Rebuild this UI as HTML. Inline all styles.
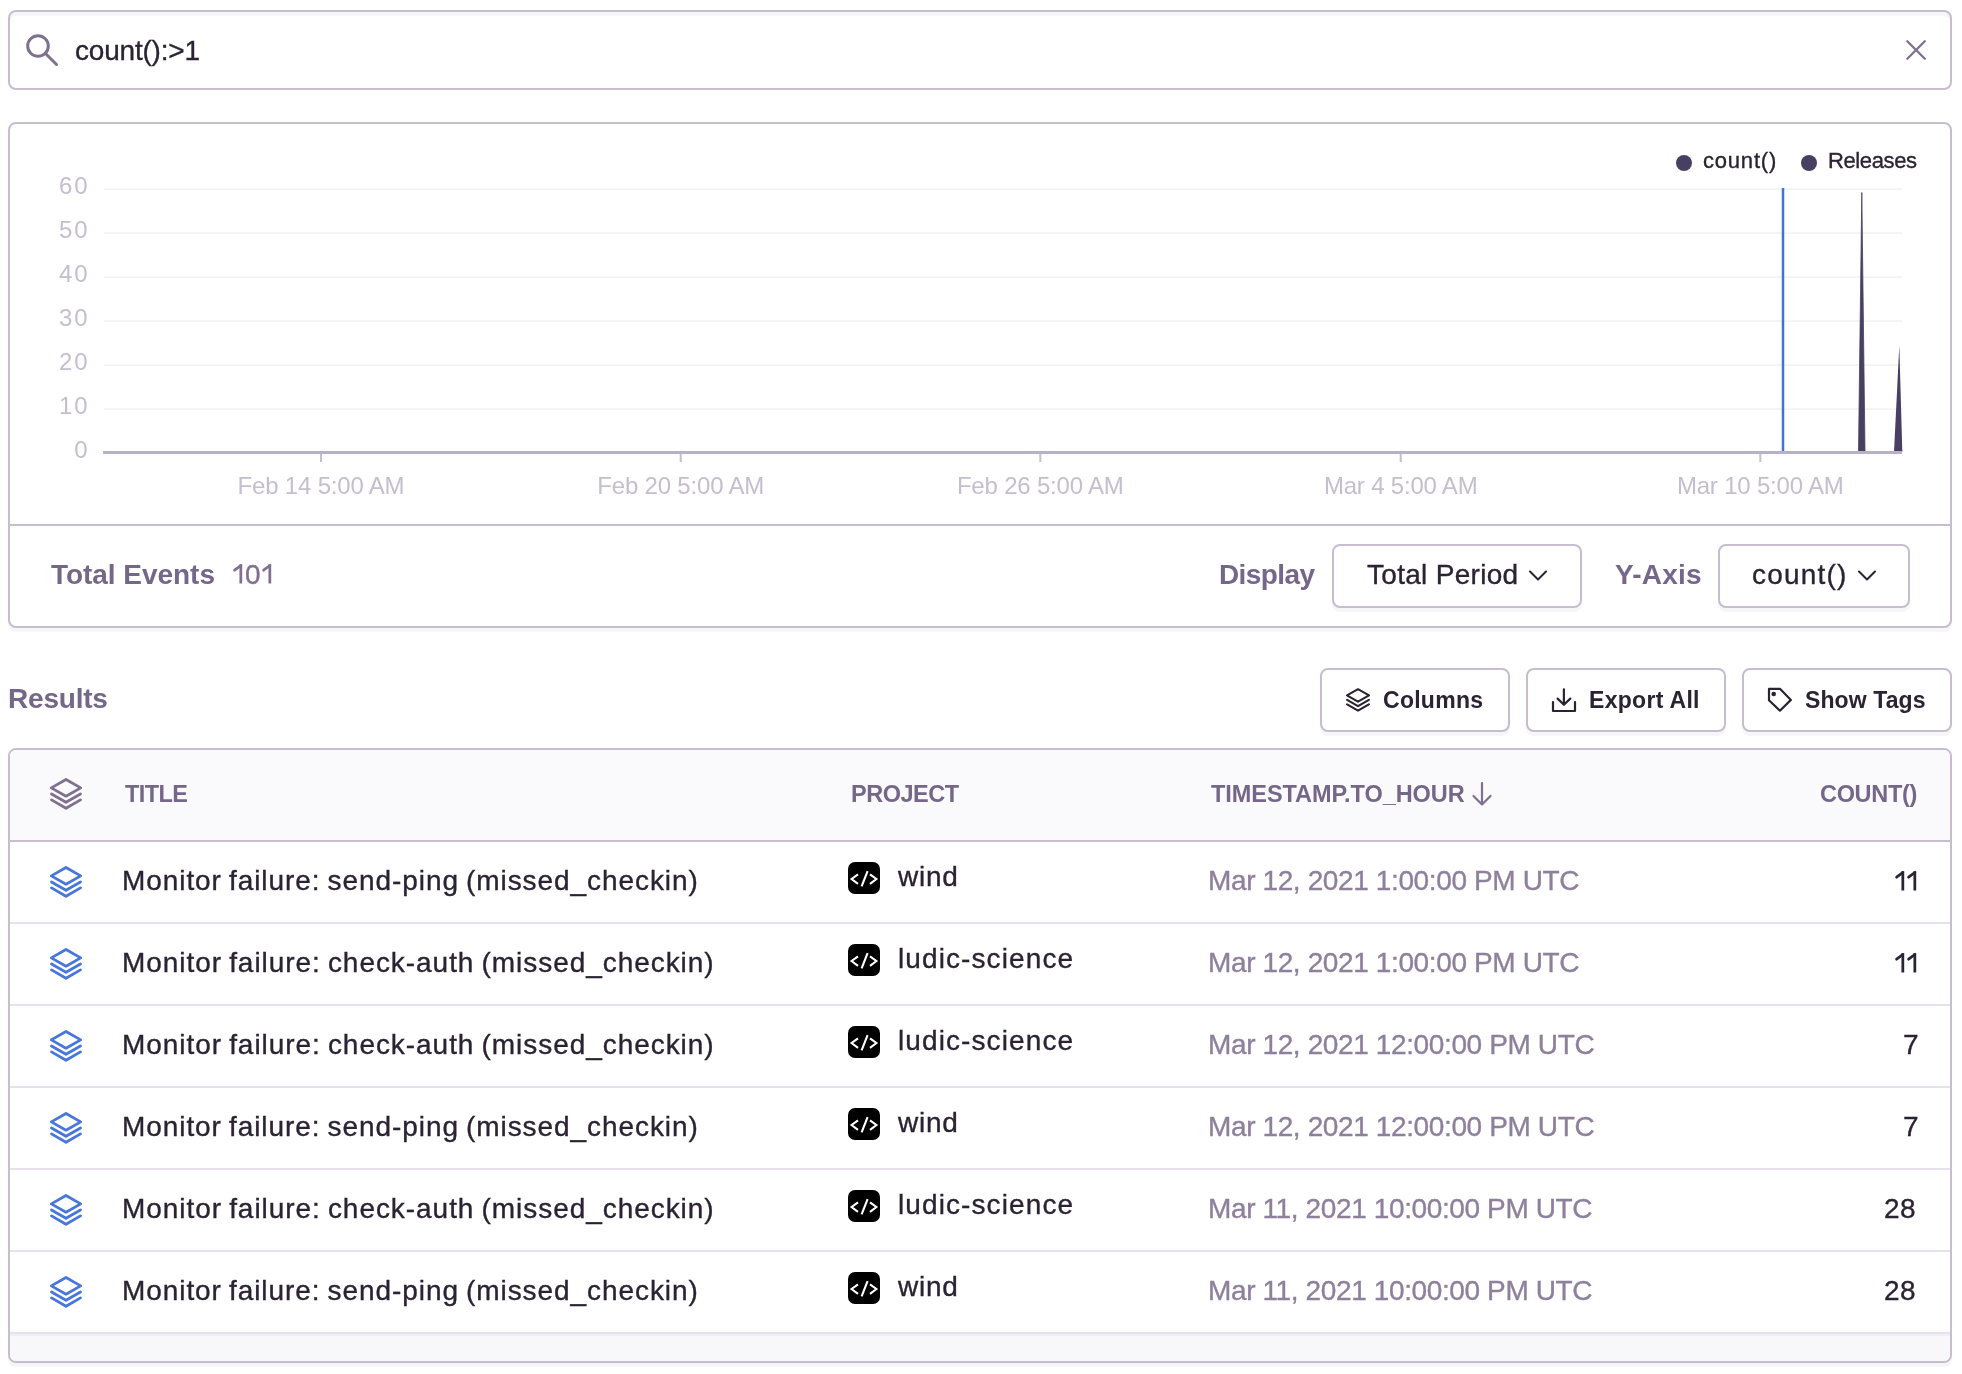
<!DOCTYPE html>
<html>
<head>
<meta charset="utf-8">
<style>
html,body{margin:0;padding:0;background:#fff;}
body{width:1962px;height:1374px;position:relative;overflow:hidden;font-family:"Liberation Sans",sans-serif;color:#2b2233;-webkit-font-smoothing:antialiased;}
.t{position:absolute;white-space:nowrap;line-height:1;will-change:transform;-webkit-text-stroke:0.35px currentColor;}
.b{font-weight:bold;-webkit-text-stroke:0;}
.g{color:#80708f;}
.b.g{color:#756789;}
.g2{color:#8e809c;}
.box{position:absolute;box-sizing:border-box;border:2px solid #c6becf;border-radius:8px;background:#fff;}
.shadow{box-shadow:0 4px 0 rgba(37,11,54,0.04);}
svg{position:absolute;overflow:visible;}
</style>
</head>
<body>

<div class="box" style="left:8px;top:10px;width:1944px;height:80px;box-shadow:inset 0 4px 0 #f6f5f8;"></div>
<svg style="left:24px;top:32px" width="36" height="36" viewBox="0 0 36 36">
  <circle cx="14" cy="14" r="10.3" fill="none" stroke="#80708f" stroke-width="3"/>
  <line x1="21.5" y1="21.5" x2="32.5" y2="32.5" stroke="#80708f" stroke-width="3" stroke-linecap="round"/>
</svg>
<div class="t " style="left:75px;top:37.30px;font-size:28px;letter-spacing:-0.2px;">count():&gt;1</div>
<svg style="left:1904px;top:38px" width="24" height="24" viewBox="0 0 24 24">
  <path d="M3.3 3.2 L20.8 20.7 M20.8 3.2 L3.3 20.7" stroke="#80708f" stroke-width="2.3" stroke-linecap="round"/>
</svg>
<div class="box shadow" style="left:8px;top:122px;width:1944px;height:506px;"></div>
<div style="position:absolute;left:10px;top:524px;width:1940px;height:2px;background:#c6becf;"></div>
<div style="position:absolute;left:1676px;top:155px;width:16px;height:16px;border-radius:50%;background:#483f62;"></div>
<div class="t " style="left:1703px;top:150.38px;font-size:22px;letter-spacing:0.8px;">count()</div>
<div style="position:absolute;left:1801px;top:155px;width:16px;height:16px;border-radius:50%;background:#483f62;"></div>
<div class="t " style="left:1828px;top:150.38px;font-size:22px;letter-spacing:-0.39px;">Releases</div>
<svg style="left:0;top:0" width="1962" height="560" viewBox="0 0 1962 560">
<g stroke="#f4f3f6" stroke-width="2"><line x1="104" y1="189" x2="1902" y2="189"/><line x1="104" y1="233" x2="1902" y2="233"/><line x1="104" y1="277" x2="1902" y2="277"/><line x1="104" y1="321" x2="1902" y2="321"/><line x1="104" y1="365" x2="1902" y2="365"/><line x1="104" y1="409" x2="1902" y2="409"/></g>
<g font-family="Liberation Sans" font-size="24" fill="#c6becf" text-anchor="end" letter-spacing="1.9"><text x="89.4" y="194">60</text><text x="89.4" y="238">50</text><text x="89.4" y="282">40</text><text x="89.4" y="326">30</text><text x="89.4" y="370">20</text><text x="89.4" y="414">10</text><text x="89.4" y="458">0</text></g>
<line x1="1783" y1="188" x2="1783" y2="452" stroke="#3d74db" stroke-width="2.5"/>
<path d="M1858.5 452 L1861.8 192.5 L1865 452 Z" fill="#483f62" stroke="#483f62" stroke-width="0.8"/>
<path d="M1894 452 L1899.3 345.5 L1902.3 452 Z" fill="#483f62"/>
<rect x="103" y="451" width="1799" height="3" fill="#b8b0c6"/>
<g stroke="#c6becf" stroke-width="2"><line x1="321" y1="454" x2="321" y2="462"/><line x1="680.7" y1="454" x2="680.7" y2="462"/><line x1="1040.3" y1="454" x2="1040.3" y2="462"/><line x1="1400.7" y1="454" x2="1400.7" y2="462"/><line x1="1760.3" y1="454" x2="1760.3" y2="462"/></g>
<g font-family="Liberation Sans" font-size="24" fill="#c6becf" text-anchor="middle" letter-spacing="-0.19"><text x="321" y="494">Feb 14 5:00 AM</text><text x="680.7" y="494">Feb 20 5:00 AM</text><text x="1040.3" y="494">Feb 26 5:00 AM</text><text x="1400.7" y="494">Mar 4 5:00 AM</text><text x="1760.3" y="494">Mar 10 5:00 AM</text></g>
</svg>
<div class="t b g" style="left:51px;top:561.30px;font-size:28px;letter-spacing:-0.04px;">Total Events</div>
<svg style="left:232.5px;top:564.2px" width="10" height="19.5" viewBox="0 0 10 19.5"><path d="M1.6 6.2 L7.8 1.5" fill="none" stroke="#80708f" stroke-width="2.75" stroke-linecap="round"/><path d="M6.45 0.2 L9.2 0.2 L9.2 19.5 L6.45 19.5 Z" fill="#80708f"/></svg>
<div class="t g" style="left:245px;top:561.30px;font-size:28px;letter-spacing:0px;">0</div>
<svg style="left:262.2px;top:564.2px" width="10" height="19.5" viewBox="0 0 10 19.5"><path d="M1.6 6.2 L7.8 1.5" fill="none" stroke="#80708f" stroke-width="2.75" stroke-linecap="round"/><path d="M6.45 0.2 L9.2 0.2 L9.2 19.5 L6.45 19.5 Z" fill="#80708f"/></svg>
<div class="t b g" style="left:1219px;top:561.30px;font-size:28px;letter-spacing:-0.6px;">Display</div>
<div class="box shadow" style="left:1332px;top:544px;width:250px;height:64px;"></div>
<div class="t " style="left:1367px;top:561.30px;font-size:28px;letter-spacing:0.3px;">Total Period</div>
<svg style="left:1528px;top:569px" width="20" height="13" viewBox="0 0 20 13"><path d="M2 2.5 L10 10.5 L18 2.5" fill="none" stroke="#2b2233" stroke-width="2.0" stroke-linecap="round" stroke-linejoin="round"/></svg>
<div class="t b g" style="left:1615px;top:561.30px;font-size:28px;letter-spacing:0.2px;">Y-Axis</div>
<div class="box shadow" style="left:1718px;top:544px;width:192px;height:64px;"></div>
<div class="t " style="left:1752px;top:561.30px;font-size:28px;letter-spacing:1.2px;">count()</div>
<svg style="left:1857px;top:569px" width="20" height="13" viewBox="0 0 20 13"><path d="M2 2.5 L10 10.5 L18 2.5" fill="none" stroke="#2b2233" stroke-width="2.0" stroke-linecap="round" stroke-linejoin="round"/></svg>
<div class="t b g" style="left:8px;top:685.30px;font-size:28px;letter-spacing:-0.2px;">Results</div>
<div class="box shadow" style="left:1320px;top:668px;width:190px;height:64px;"></div>
<svg style="left:1346px;top:688px" width="24" height="24" viewBox="0 0 24 24">
  <path d="M12 1.2 L23 7.4 L12 13.6 L1 7.4 Z M1.1 11.9 L12 18.2 L22.9 11.9 M1.1 16.3 L12 22.7 L22.9 16.3" fill="none" stroke="#2b2233" stroke-width="2.1" stroke-linejoin="round" stroke-linecap="round"/>
</svg>
<div class="t b" style="left:1383px;top:688.53px;font-size:23px;letter-spacing:0.27px;">Columns</div>
<div class="box shadow" style="left:1526px;top:668px;width:200px;height:64px;"></div>
<svg style="left:1552px;top:688px" width="24" height="24" viewBox="0 0 24 24">
  <path d="M11.9 1.3 L11.9 16.5 M5.6 10.6 L11.9 16.8 L18.3 10.6 M1 14.1 L1 23 L23 23 L23 14.1" fill="none" stroke="#2b2233" stroke-width="2.2" stroke-linecap="round" stroke-linejoin="round"/>
</svg>
<div class="t b" style="left:1589px;top:688.53px;font-size:23px;letter-spacing:0.3px;">Export All</div>
<div class="box shadow" style="left:1742px;top:668px;width:210px;height:64px;"></div>
<svg style="left:1768px;top:688px" width="24" height="24" viewBox="0 0 24 24">
  <path d="M1 0.9 L12.2 0.9 L22.9 11.9 L11.9 22.7 L1 12.2 Z" fill="none" stroke="#2b2233" stroke-width="2.2" stroke-linejoin="round"/>
  <circle cx="5.7" cy="6" r="2.3" fill="#2b2233"/>
</svg>
<div class="t b" style="left:1805px;top:688.53px;font-size:23px;letter-spacing:0.11px;">Show Tags</div>
<div class="box shadow" style="left:8px;top:748px;width:1944px;height:615px;overflow:hidden;">
  <div style="position:absolute;left:0;top:0;width:100%;height:90px;background:#faf9fb;border-bottom:2px solid #c6becf;"></div>
  <div style="position:absolute;left:0;top:582px;width:100%;height:29px;background:#f8f7fa;border-top:2px solid #e7e1ec;box-shadow:inset 0 2px 0 #f1eff3;"></div>
</div>
<svg style="left:50px;top:778px" width="32" height="32" viewBox="0 0 32 32"><path d="M16 1.5 L30.7 9.9 L16 18.2 L1.3 9.9 Z M1.5 16 L16 24.3 L30.5 16 M1.5 21.9 L16 30.3 L30.5 21.9" fill="none" stroke="#80708f" stroke-width="2.8" stroke-linejoin="round" stroke-linecap="round"/></svg>
<div class="t b g" style="left:125px;top:783.11px;font-size:23.5px;letter-spacing:-0.57px;">TITLE</div>
<div class="t b g" style="left:851px;top:783.11px;font-size:23.5px;letter-spacing:-0.5px;">PROJECT</div>
<div class="t b g" style="left:1211px;top:783.11px;font-size:23.5px;letter-spacing:-0.06px;">TIMESTAMP.TO_HOUR</div>
<svg style="left:1470px;top:781px" width="24" height="26" viewBox="0 0 24 26"><path d="M12 2 L12 23.5 M3.5 15 L12 23.5 L20.5 15" fill="none" stroke="#80708f" stroke-width="2.2" stroke-linecap="round" stroke-linejoin="round"/></svg>
<div class="t b g" style="left:1820px;top:783.11px;font-size:23.5px;letter-spacing:-0.32px;">COUNT()</div>
<svg style="left:50px;top:866px" width="32" height="32" viewBox="0 0 32 32"><path d="M16 1.5 L30.7 9.9 L16 18.2 L1.3 9.9 Z M1.5 16 L16 24.3 L30.5 16 M1.5 21.9 L16 30.3 L30.5 21.9" fill="none" stroke="#4777da" stroke-width="2.8" stroke-linejoin="round" stroke-linecap="round"/></svg>
<div class="t " style="left:122px;top:867.30px;font-size:28px;letter-spacing:0.93px;word-spacing:-1.6px;">Monitor failure: send-ping (missed_checkin)</div>
<div style="position:absolute;left:848px;top:862px;width:32px;height:32px;border-radius:7px;background:#000;"></div>
<svg style="left:848px;top:862px" width="32" height="32" viewBox="0 0 32 32"><path d="M10 12.3 L3.6 17 L10 21.8 M22 12.3 L28.4 17 L22 21.8 M19.6 9.2 L13.6 24.4" fill="none" stroke="#fff" stroke-width="2.1" stroke-linecap="butt"/></svg>
<div class="t " style="left:898px;top:863.30px;font-size:28px;letter-spacing:0.77px;">wind</div>
<div class="t g2" style="left:1208px;top:867.30px;font-size:28px;letter-spacing:-0.38px;">Mar 12, 2021 1:00:00 PM UTC</div>
<svg style="left:1894.8px;top:870.5px" width="10" height="19.5" viewBox="0 0 10 19.5"><path d="M1.6 6.2 L7.8 1.5" fill="none" stroke="#2b2233" stroke-width="2.75" stroke-linecap="round"/><path d="M6.45 0.2 L9.2 0.2 L9.2 19.5 L6.45 19.5 Z" fill="#2b2233"/></svg>
<svg style="left:1906.6px;top:870.5px" width="10" height="19.5" viewBox="0 0 10 19.5"><path d="M1.6 6.2 L7.8 1.5" fill="none" stroke="#2b2233" stroke-width="2.75" stroke-linecap="round"/><path d="M6.45 0.2 L9.2 0.2 L9.2 19.5 L6.45 19.5 Z" fill="#2b2233"/></svg>
<div style="position:absolute;left:10px;top:922px;width:1940px;height:2px;background:#e7e1ec;"></div>
<svg style="left:50px;top:948px" width="32" height="32" viewBox="0 0 32 32"><path d="M16 1.5 L30.7 9.9 L16 18.2 L1.3 9.9 Z M1.5 16 L16 24.3 L30.5 16 M1.5 21.9 L16 30.3 L30.5 21.9" fill="none" stroke="#4777da" stroke-width="2.8" stroke-linejoin="round" stroke-linecap="round"/></svg>
<div class="t " style="left:122px;top:949.30px;font-size:28px;letter-spacing:0.95px;word-spacing:-1.6px;">Monitor failure: check-auth (missed_checkin)</div>
<div style="position:absolute;left:848px;top:944px;width:32px;height:32px;border-radius:7px;background:#000;"></div>
<svg style="left:848px;top:944px" width="32" height="32" viewBox="0 0 32 32"><path d="M10 12.3 L3.6 17 L10 21.8 M22 12.3 L28.4 17 L22 21.8 M19.6 9.2 L13.6 24.4" fill="none" stroke="#fff" stroke-width="2.1" stroke-linecap="butt"/></svg>
<div class="t " style="left:898px;top:945.30px;font-size:28px;letter-spacing:1.1px;">ludic-science</div>
<div class="t g2" style="left:1208px;top:949.30px;font-size:28px;letter-spacing:-0.38px;">Mar 12, 2021 1:00:00 PM UTC</div>
<svg style="left:1894.8px;top:952.5px" width="10" height="19.5" viewBox="0 0 10 19.5"><path d="M1.6 6.2 L7.8 1.5" fill="none" stroke="#2b2233" stroke-width="2.75" stroke-linecap="round"/><path d="M6.45 0.2 L9.2 0.2 L9.2 19.5 L6.45 19.5 Z" fill="#2b2233"/></svg>
<svg style="left:1906.6px;top:952.5px" width="10" height="19.5" viewBox="0 0 10 19.5"><path d="M1.6 6.2 L7.8 1.5" fill="none" stroke="#2b2233" stroke-width="2.75" stroke-linecap="round"/><path d="M6.45 0.2 L9.2 0.2 L9.2 19.5 L6.45 19.5 Z" fill="#2b2233"/></svg>
<div style="position:absolute;left:10px;top:1004px;width:1940px;height:2px;background:#e7e1ec;"></div>
<svg style="left:50px;top:1030px" width="32" height="32" viewBox="0 0 32 32"><path d="M16 1.5 L30.7 9.9 L16 18.2 L1.3 9.9 Z M1.5 16 L16 24.3 L30.5 16 M1.5 21.9 L16 30.3 L30.5 21.9" fill="none" stroke="#4777da" stroke-width="2.8" stroke-linejoin="round" stroke-linecap="round"/></svg>
<div class="t " style="left:122px;top:1031.30px;font-size:28px;letter-spacing:0.95px;word-spacing:-1.6px;">Monitor failure: check-auth (missed_checkin)</div>
<div style="position:absolute;left:848px;top:1026px;width:32px;height:32px;border-radius:7px;background:#000;"></div>
<svg style="left:848px;top:1026px" width="32" height="32" viewBox="0 0 32 32"><path d="M10 12.3 L3.6 17 L10 21.8 M22 12.3 L28.4 17 L22 21.8 M19.6 9.2 L13.6 24.4" fill="none" stroke="#fff" stroke-width="2.1" stroke-linecap="butt"/></svg>
<div class="t " style="left:898px;top:1027.30px;font-size:28px;letter-spacing:1.1px;">ludic-science</div>
<div class="t g2" style="left:1208px;top:1031.30px;font-size:28px;letter-spacing:-0.38px;">Mar 12, 2021 12:00:00 PM UTC</div>
<div class="t " style="left:1903px;top:1031.30px;font-size:28px;letter-spacing:0px;">7</div>
<div style="position:absolute;left:10px;top:1086px;width:1940px;height:2px;background:#e7e1ec;"></div>
<svg style="left:50px;top:1112px" width="32" height="32" viewBox="0 0 32 32"><path d="M16 1.5 L30.7 9.9 L16 18.2 L1.3 9.9 Z M1.5 16 L16 24.3 L30.5 16 M1.5 21.9 L16 30.3 L30.5 21.9" fill="none" stroke="#4777da" stroke-width="2.8" stroke-linejoin="round" stroke-linecap="round"/></svg>
<div class="t " style="left:122px;top:1113.30px;font-size:28px;letter-spacing:0.93px;word-spacing:-1.6px;">Monitor failure: send-ping (missed_checkin)</div>
<div style="position:absolute;left:848px;top:1108px;width:32px;height:32px;border-radius:7px;background:#000;"></div>
<svg style="left:848px;top:1108px" width="32" height="32" viewBox="0 0 32 32"><path d="M10 12.3 L3.6 17 L10 21.8 M22 12.3 L28.4 17 L22 21.8 M19.6 9.2 L13.6 24.4" fill="none" stroke="#fff" stroke-width="2.1" stroke-linecap="butt"/></svg>
<div class="t " style="left:898px;top:1109.30px;font-size:28px;letter-spacing:0.77px;">wind</div>
<div class="t g2" style="left:1208px;top:1113.30px;font-size:28px;letter-spacing:-0.38px;">Mar 12, 2021 12:00:00 PM UTC</div>
<div class="t " style="left:1903px;top:1113.30px;font-size:28px;letter-spacing:0px;">7</div>
<div style="position:absolute;left:10px;top:1168px;width:1940px;height:2px;background:#e7e1ec;"></div>
<svg style="left:50px;top:1194px" width="32" height="32" viewBox="0 0 32 32"><path d="M16 1.5 L30.7 9.9 L16 18.2 L1.3 9.9 Z M1.5 16 L16 24.3 L30.5 16 M1.5 21.9 L16 30.3 L30.5 21.9" fill="none" stroke="#4777da" stroke-width="2.8" stroke-linejoin="round" stroke-linecap="round"/></svg>
<div class="t " style="left:122px;top:1195.30px;font-size:28px;letter-spacing:0.95px;word-spacing:-1.6px;">Monitor failure: check-auth (missed_checkin)</div>
<div style="position:absolute;left:848px;top:1190px;width:32px;height:32px;border-radius:7px;background:#000;"></div>
<svg style="left:848px;top:1190px" width="32" height="32" viewBox="0 0 32 32"><path d="M10 12.3 L3.6 17 L10 21.8 M22 12.3 L28.4 17 L22 21.8 M19.6 9.2 L13.6 24.4" fill="none" stroke="#fff" stroke-width="2.1" stroke-linecap="butt"/></svg>
<div class="t " style="left:898px;top:1191.30px;font-size:28px;letter-spacing:1.1px;">ludic-science</div>
<div class="t g2" style="left:1208px;top:1195.30px;font-size:28px;letter-spacing:-0.38px;">Mar 11, 2021 10:00:00 PM UTC</div>
<div class="t " style="left:1884px;top:1195.30px;font-size:28px;letter-spacing:0.5px;">28</div>
<div style="position:absolute;left:10px;top:1250px;width:1940px;height:2px;background:#e7e1ec;"></div>
<svg style="left:50px;top:1276px" width="32" height="32" viewBox="0 0 32 32"><path d="M16 1.5 L30.7 9.9 L16 18.2 L1.3 9.9 Z M1.5 16 L16 24.3 L30.5 16 M1.5 21.9 L16 30.3 L30.5 21.9" fill="none" stroke="#4777da" stroke-width="2.8" stroke-linejoin="round" stroke-linecap="round"/></svg>
<div class="t " style="left:122px;top:1277.30px;font-size:28px;letter-spacing:0.93px;word-spacing:-1.6px;">Monitor failure: send-ping (missed_checkin)</div>
<div style="position:absolute;left:848px;top:1272px;width:32px;height:32px;border-radius:7px;background:#000;"></div>
<svg style="left:848px;top:1272px" width="32" height="32" viewBox="0 0 32 32"><path d="M10 12.3 L3.6 17 L10 21.8 M22 12.3 L28.4 17 L22 21.8 M19.6 9.2 L13.6 24.4" fill="none" stroke="#fff" stroke-width="2.1" stroke-linecap="butt"/></svg>
<div class="t " style="left:898px;top:1273.30px;font-size:28px;letter-spacing:0.77px;">wind</div>
<div class="t g2" style="left:1208px;top:1277.30px;font-size:28px;letter-spacing:-0.38px;">Mar 11, 2021 10:00:00 PM UTC</div>
<div class="t " style="left:1884px;top:1277.30px;font-size:28px;letter-spacing:0.5px;">28</div>
</body>
</html>
